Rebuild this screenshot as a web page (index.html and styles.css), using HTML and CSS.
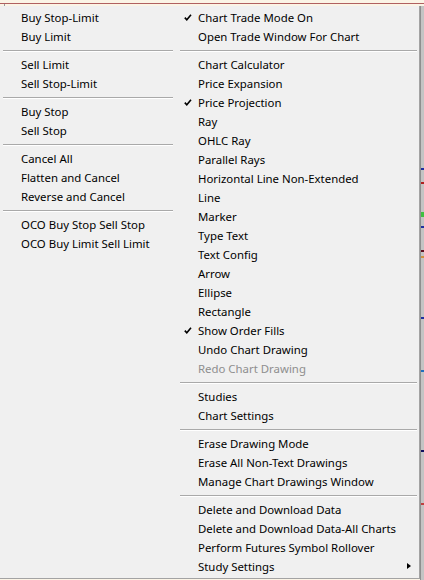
FILE: index.html
```html
<!DOCTYPE html>
<html>
<head>
<meta charset="utf-8">
<link rel="stylesheet" href="styles.css">
</head>
<body>
<div class="chart-top"><span class="tick-top"></span></div>
<div class="screen">
  <div class="menu">
    <ul class="col col-left">
      <li class="item">Buy Stop-Limit</li>
      <li class="item">Buy Limit</li>
      <li class="sep"></li>
      <li class="item">Sell Limit</li>
      <li class="item">Sell Stop-Limit</li>
      <li class="sep"></li>
      <li class="item">Buy Stop</li>
      <li class="item">Sell Stop</li>
      <li class="sep"></li>
      <li class="item">Cancel All</li>
      <li class="item">Flatten and Cancel</li>
      <li class="item">Reverse and Cancel</li>
      <li class="sep"></li>
      <li class="item">OCO Buy Stop Sell Stop</li>
      <li class="item">OCO Buy Limit Sell Limit</li>
    </ul>
    <ul class="col col-right">
      <li class="item checked"><svg class="check" width="8" height="7" viewBox="0 0 8 7"><path d="M0.8 3.6 L2.8 5.8 L7 0.8" fill="none" stroke="#000" stroke-width="1.6"/></svg>Chart Trade Mode On</li>
      <li class="item">Open Trade Window For Chart</li>
      <li class="sep"></li>
      <li class="item">Chart Calculator</li>
      <li class="item">Price Expansion</li>
      <li class="item checked"><svg class="check" width="8" height="7" viewBox="0 0 8 7"><path d="M0.8 3.6 L2.8 5.8 L7 0.8" fill="none" stroke="#000" stroke-width="1.6"/></svg>Price Projection</li>
      <li class="item">Ray</li>
      <li class="item">OHLC Ray</li>
      <li class="item">Parallel Rays</li>
      <li class="item">Horizontal Line Non-Extended</li>
      <li class="item">Line</li>
      <li class="item">Marker</li>
      <li class="item">Type Text</li>
      <li class="item">Text Config</li>
      <li class="item">Arrow</li>
      <li class="item">Ellipse</li>
      <li class="item">Rectangle</li>
      <li class="item checked"><svg class="check" width="8" height="7" viewBox="0 0 8 7"><path d="M0.8 3.6 L2.8 5.8 L7 0.8" fill="none" stroke="#000" stroke-width="1.6"/></svg>Show Order Fills</li>
      <li class="item">Undo Chart Drawing</li>
      <li class="item disabled">Redo Chart Drawing</li>
      <li class="sep"></li>
      <li class="item">Studies</li>
      <li class="item">Chart Settings</li>
      <li class="sep"></li>
      <li class="item">Erase Drawing Mode</li>
      <li class="item">Erase All Non-Text Drawings</li>
      <li class="item">Manage Chart Drawings Window</li>
      <li class="sep"></li>
      <li class="item">Delete and Download Data</li>
      <li class="item">Delete and Download Data-All Charts</li>
      <li class="item">Perform Futures Symbol Rollover</li>
      <li class="item has-sub">Study Settings<span class="arrow"></span></li>
    </ul>
  </div>
  <div class="axis">
    <span class="tk tk1"></span>
    <span class="tk tk2"></span>
    <span class="tk tk3"></span>
    <span class="tk tk4"></span>
    <span class="tk tk5"></span>
    <span class="tk tk6"></span>
    <span class="tk tk7"></span>
    <span class="tk tk8"></span>
    <span class="tk tk9"></span>
    <span class="tk tk10"></span>
  </div>
</div>
</body>
</html>
```

FILE: styles.css
```css
* { box-sizing: border-box; }
html, body {
  margin: 0;
  padding: 0;
  width: 424px;
  height: 580px;
  overflow: hidden;
  background: #fbf4e6;
  font-family: "Noto Sans", "Open Sans", sans-serif;
  font-size: 11.4px;
  color: #000;
}
.chart-top {
  height: 6px;
  position: relative;
  background: #fbf4e6;
}
.chart-top::after {
  content: "";
  position: absolute;
  left: 0;
  right: 0;
  top: 3px;
  height: 1px;
  background: #b06060;
}
.tick-top {
  position: absolute;
  left: 4px;
  top: 3px;
  width: 1px;
  height: 3px;
  background: #9a9a9a;
}
.screen {
  display: flex;
  height: 574px;
}
.menu {
  display: flex;
  width: 420px;
  height: 573px;
  background: #f0f0f0;
  border-right: 1px solid #a3a3a3;
  border-bottom: 1px solid #a3a3a3;
  padding-top: 2px;
}
.col {
  list-style: none;
  margin: 0;
  padding: 0;
}
.col-left {
  width: 176px;
  padding-left: 21px;
}
.col-right {
  flex: 1;
  padding-left: 22px;
}
.item {
  height: 19px;
  line-height: 19px;
  white-space: nowrap;
  position: relative;
}
.disabled { color: #8e8e8e; }
.check {
  position: absolute;
  left: -14px;
  top: 6px;
}
.sep {
  height: 9px;
  padding-top: 4px;
}
.sep::before {
  content: "";
  display: block;
  height: 1px;
  background: #a9a9a9;
  border-bottom: 1px solid #ffffff;
  box-sizing: content-box;
}
.col-left .sep { margin-left: -18px; margin-right: 3px; }
.col-right .sep { margin-left: -18px; margin-right: 2px; }
.arrow {
  position: absolute;
  left: 209px;
  top: 6px;
  width: 0;
  height: 0;
  border-top: 3.5px solid transparent;
  border-bottom: 3.5px solid transparent;
  border-left: 4px solid #000;
}
.axis {
  width: 4px;
  height: 574px;
  background: #c4c4c4;
  border-left: 1px solid #8f8f8f;
  position: relative;
}
.tk {
  position: absolute;
  left: 0;
  width: 3px;
  height: 2px;
}
.tk1 { top: 162px; background: #2030a0; }
.tk2 { top: 176px; background: #b02020; }
.tk3 { top: 206px; height: 5px; background: #40c040; }
.tk4 { top: 220px; background: #2030a0; }
.tk5 { top: 244px; background: #601020; }
.tk6 { top: 250px; background: #d09040; }
.tk7 { top: 311px; background: #2030a0; }
.tk8 { top: 364px; background: #2070c0; }
.tk9 { top: 444px; background: #101060; }
.tk10 { top: 497px; background: #c04040; }
```
